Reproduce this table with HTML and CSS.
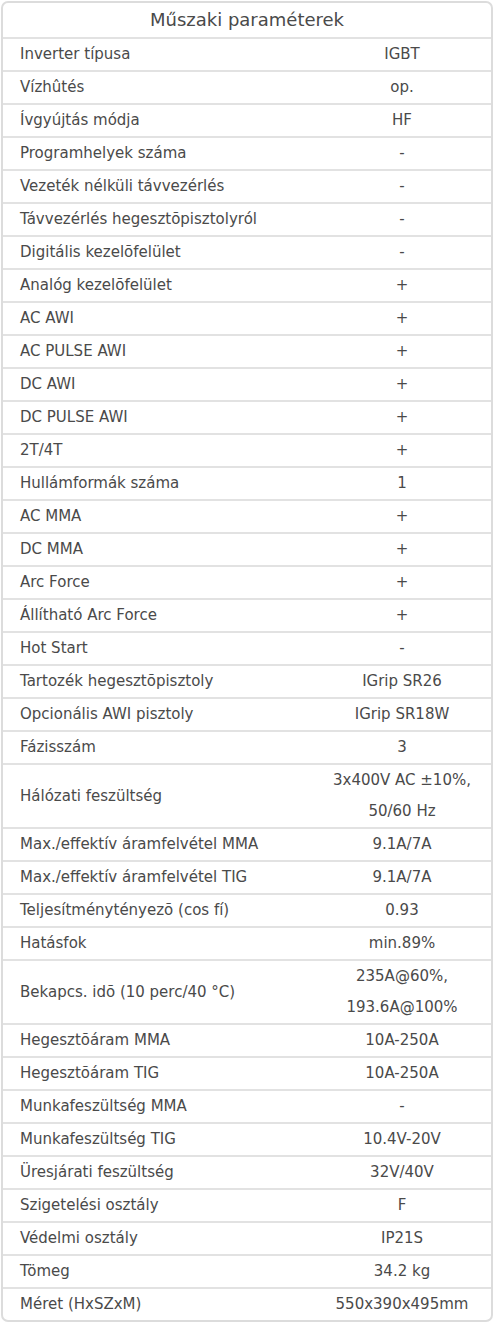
FILE: index.html
```html
<!DOCTYPE html>
<html lang="hu">
<head>
<meta charset="utf-8">
<link rel="stylesheet" href="styles.css">
</head>
<body>
<div class="box">
<table class="spec">
<colgroup><col class="c-label"><col class="c-value"></colgroup>
<thead><tr><th colspan="2">Műszaki paraméterek</th></tr></thead>
<tbody>
<tr><td>Inverter típusa</td><td>IGBT</td></tr>
<tr><td>Vízhûtés</td><td>op.</td></tr>
<tr><td>Ívgyújtás módja</td><td>HF</td></tr>
<tr><td>Programhelyek száma</td><td>-</td></tr>
<tr><td>Vezeték nélküli távvezérlés</td><td>-</td></tr>
<tr><td>Távvezérlés hegesztõpisztolyról</td><td>-</td></tr>
<tr><td>Digitális kezelõfelület</td><td>-</td></tr>
<tr><td>Analóg kezelõfelület</td><td>+</td></tr>
<tr><td>AC AWI</td><td>+</td></tr>
<tr><td>AC PULSE AWI</td><td>+</td></tr>
<tr><td>DC AWI</td><td>+</td></tr>
<tr><td>DC PULSE AWI</td><td>+</td></tr>
<tr><td>2T/4T</td><td>+</td></tr>
<tr><td>Hullámformák száma</td><td>1</td></tr>
<tr><td>AC MMA</td><td>+</td></tr>
<tr><td>DC MMA</td><td>+</td></tr>
<tr><td>Arc Force</td><td>+</td></tr>
<tr><td>Állítható Arc Force</td><td>+</td></tr>
<tr><td>Hot Start</td><td>-</td></tr>
<tr><td>Tartozék hegesztõpisztoly</td><td>IGrip SR26</td></tr>
<tr><td>Opcionális AWI pisztoly</td><td>IGrip SR18W</td></tr>
<tr><td>Fázisszám</td><td>3</td></tr>
<tr><td>Hálózati feszültség</td><td>3x400V AC ±10%,<br>50/60 Hz</td></tr>
<tr><td>Max./effektív áramfelvétel MMA</td><td>9.1A/7A</td></tr>
<tr><td>Max./effektív áramfelvétel TIG</td><td>9.1A/7A</td></tr>
<tr><td>Teljesítménytényezõ (cos fí)</td><td>0.93</td></tr>
<tr><td>Hatásfok</td><td>min.89%</td></tr>
<tr><td>Bekapcs. idõ (10 perc/40 °C)</td><td>235A@60%,<br>193.6A@100%</td></tr>
<tr><td>Hegesztõáram MMA</td><td>10A-250A</td></tr>
<tr><td>Hegesztõáram TIG</td><td>10A-250A</td></tr>
<tr><td>Munkafeszültség MMA</td><td>-</td></tr>
<tr><td>Munkafeszültség TIG</td><td>10.4V-20V</td></tr>
<tr><td>Üresjárati feszültség</td><td>32V/40V</td></tr>
<tr><td>Szigetelési osztály</td><td>F</td></tr>
<tr><td>Védelmi osztály</td><td>IP21S</td></tr>
<tr><td>Tömeg</td><td>34.2 kg</td></tr>
<tr><td>Méret (HxSZxM)</td><td>550x390x495mm</td></tr>
</tbody>
</table>
</div>
</body>
</html>
```
FILE: styles.css
```css
html, body {
  margin: 0;
  padding: 0;
  background: #fff;
}
body {
  padding: 1px 2px 2px 1px;
  font-family: "DejaVu Sans", Verdana, sans-serif;
  color: #4a4a4a;
}
.box {
  border: 2px solid #dcdcdc;
  border-radius: 7px;
  overflow: hidden;
  background: #fff;
}
.spec {
  width: 100%;
  border-collapse: collapse;
  table-layout: fixed;
}
.c-value {
  width: 178px;
}
.spec th {
  font-weight: normal;
  font-size: 18px;
  line-height: 34px;
  height: 34px;
  padding: 0;
  text-align: center;
  border-bottom: 2px solid #e2e2e2;
}
.spec td {
  font-size: 15px;
  line-height: 31px;
  padding: 0;
  border-bottom: 2px solid #e2e2e2;
  vertical-align: middle;
  white-space: nowrap;
}
.spec tr:last-child td {
  border-bottom: 0;
}
.spec td:first-child {
  padding-left: 17px;
}
.spec td:last-child {
  text-align: center;
}
```
